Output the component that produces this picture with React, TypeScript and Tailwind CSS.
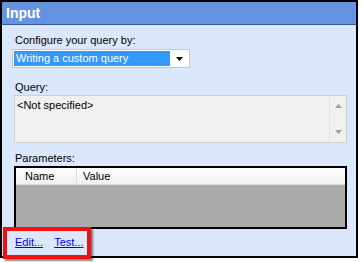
import React from "react";

const font = { fontFamily: '"Liberation Sans", Arial, sans-serif' };

function ScrollArrow({ up }: { up?: boolean }) {
  return (
    <svg width="7" height="4" viewBox="0 0 7 4" className="block">
      {up ? (
        <path d="M0 4 L3.5 0 L7 4 Z" fill="#a0a0a0" />
      ) : (
        <path d="M0 0 L3.5 4 L7 0 Z" fill="#a0a0a0" />
      )}
    </svg>
  );
}

export default function App() {
  return (
    <div className="relative h-[262px] w-[362px] bg-white text-[11px] text-black" style={font}>
      <div className="flex h-[258px] w-[358px] flex-col border-2 border-black bg-[#dbe8fb]">
        <div className="flex h-[23px] shrink-0 items-center border-b border-[#34579a] bg-[#6593e0] pl-[4px] text-[14px] font-bold text-white">
          Input
        </div>

        <div className="flex flex-col pl-[12px] pr-[9px]">
          <div className="mt-[8px] h-[14px] pl-[1px] leading-[14px]">Configure your query by:</div>

          <div className="-ml-[2px] mt-[2px] flex h-[19px] w-[178px] items-center border border-[#c8c8c8] bg-white p-[1px]">
            <div className="flex h-full flex-1 items-center bg-[#3399ff] pl-[2px] text-white">
              Writing a custom query
            </div>
            <div className="flex w-[18px] items-center justify-center">
              <svg width="7" height="4" viewBox="0 0 7 4">
                <path d="M0 0 L7 0 L3.5 4 Z" fill="#000" />
              </svg>
            </div>
          </div>

          <div className="mt-[12px] h-[14px] pl-[1px] leading-[14px]">Query:</div>

          <div className="mt-[1px] flex h-[48px] w-[333px] border border-[#d0d0d0] bg-[#f0f0f0]">
            <div className="flex-1 pl-[2px] pt-[2px] leading-[14px]">&lt;Not specified&gt;</div>
            <div className="flex w-[17px] flex-col items-center justify-between border-l border-[#e2e2e2] py-[8px]">
              <ScrollArrow up />
              <ScrollArrow />
            </div>
          </div>

          <div className="mt-[8px] h-[14px] pl-[1px] leading-[14px]">Parameters:</div>

          <div className="mt-[1px] flex h-[63px] w-[333px] flex-col border-2 border-black bg-[#ababab]">
            <div className="flex h-[17px] shrink-0 border-b border-[#dcdcdc] bg-gradient-to-b from-white to-[#f0f0f0]">
              <div className="w-[61px] border-r border-[#e0e0e0] pl-[9px] leading-[16px]">Name</div>
              <div className="pl-[6px] leading-[16px]">Value</div>
            </div>
          </div>

          <div className="mt-[6px] flex gap-[11px] pl-[1px] leading-[14px] text-[#0000ff]">
            <span className="underline">Edit...</span>
            <span className="underline">Test...</span>
          </div>
        </div>
      </div>

      <div className="pointer-events-none absolute left-[3px] top-[227px] h-[32px] w-[88px] border-4 border-[#ee1111] shadow-[2px_2px_2px_rgba(0,0,0,0.5)]" />
    </div>
  );
}
